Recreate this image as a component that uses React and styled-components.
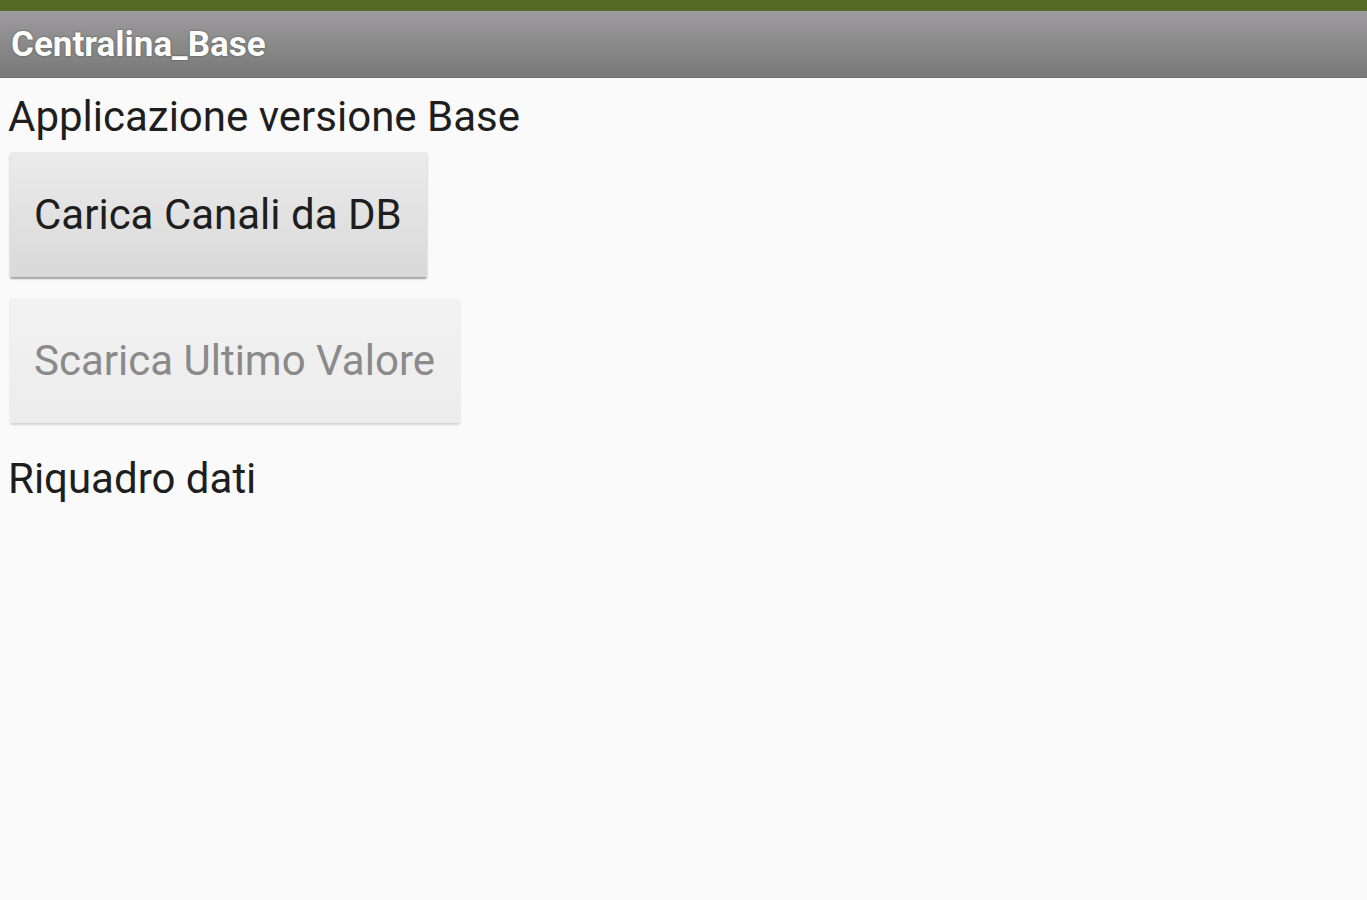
import React from "react";
import styled, { createGlobalStyle } from "styled-components";

const Global = createGlobalStyle`
  html, body {
    margin: 0;
    padding: 0;
    background: #fafafa;
    font-family: Roboto, "Noto Sans", sans-serif;
  }
`

const Screen = styled.div`
    min-height: 900px;
    background: #fafafa;
    display: flex;
    flex-direction: column;
`

const StatusBar = styled.div`
    height: 11px;
    background: #556b24;
`

const TitleBar = styled.div`
    height: 66px;
    background: linear-gradient(#9e9c9e, #787878);
    border-bottom: 1px solid #6e6e6e;
    display: flex;
    align-items: center;
    padding-left: 11px;
    color: #ffffff;
    font-weight: 700;
    font-size: 35px;
    text-shadow: 0 0 2px rgba(0, 0, 0, 0.5);
`

const Content = styled.div`
    display: flex;
    flex-direction: column;
    align-items: flex-start;
    padding: 0 8px;
`

const Label = styled.div`
    font-size: 42px;
    color: #1e1e1e;
    line-height: 48px;
    margin-top: ${p => p.$top}px;
`

const Button = styled.button`
    font-family: Roboto, "Noto Sans", sans-serif;
    font-size: 42px;
    line-height: 48px;
    padding: 39px 25px 38px 24px;
    margin: ${p => p.$top}px 0 0 2px;
    border: none;
    border-radius: 2px;
    color: ${p => p.disabled ? '#8a8a8a' : '#1e1e1e'};
    background: ${p => p.disabled
        ? 'linear-gradient(#f2f2f2, #ececec)'
        : 'linear-gradient(#ebebeb, #d9d9d9)'};
    box-shadow: ${p => p.disabled
        ? '0 2px 2px rgba(0,0,0,0.15)'
        : '0 2px 2px rgba(0,0,0,0.35)'};
    cursor: pointer;
`

export default function App() {
    return (
        <>
            <Global />
            <Screen>
                <StatusBar />
                <TitleBar>Centralina_Base</TitleBar>
                <Content>
                    <Label $top={15}>Applicazione versione Base</Label>
                    <Button $top={11}>Carica Canali da DB</Button>
                    <Button $top={21} disabled>Scarica Ultimo Valore</Button>
                    <Label $top={32}>Riquadro dati</Label>
                </Content>
            </Screen>
        </>
    )
}
